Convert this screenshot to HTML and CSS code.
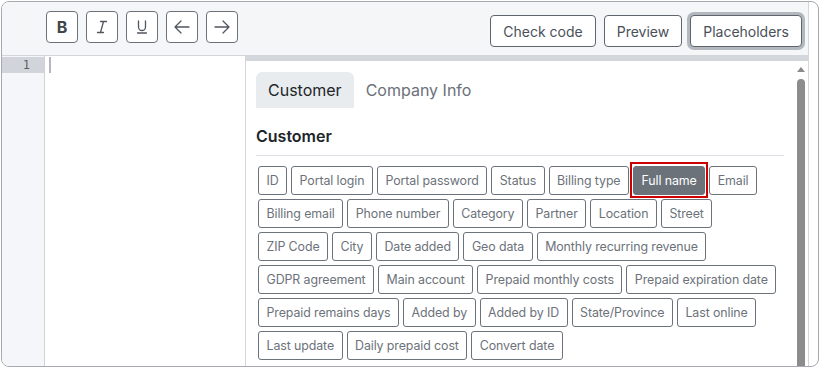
FILE: index.html
```html
<!DOCTYPE html>
<html>
<head>
    <meta charset="utf-8" />
    <title>Template editor</title>
    <link rel="stylesheet" href="styles.css">
</head>
<body>
    <div class="frame">
        <div class="editor">
            <div class="toolbar">
                <div class="group">
                    <button class="tool"><b>B</b></button>
                    <button class="tool">
                        <svg width="16" height="16" viewBox="0 0 16 16"><path d="M6.5 2.5h6M3.5 13.5h6M9.5 2.5l-3 11" /></svg>
                    </button>
                    <button class="tool">
                        <svg width="16" height="16" viewBox="0 0 16 16"><path d="M4.5 2v6a3.5 3.5 0 0 0 7 0V2M3.5 14h9" /></svg>
                    </button>
                    <button class="tool">
                        <svg width="18" height="18" viewBox="0 0 18 18"><path d="M16 9H2M8 3L2 9l6 6" /></svg>
                    </button>
                    <button class="tool">
                        <svg width="18" height="18" viewBox="0 0 18 18"><path d="M2 9h14M10 3l6 6-6 6" /></svg>
                    </button>
                </div>
                <div class="group right">
                    <button class="action">Check code</button>
                    <button class="action">Preview</button>
                    <button class="action focused">Placeholders</button>
                </div>
            </div>

            <div class="code">
                <div class="gutter">
                    <div class="lineno active">1</div>
                </div>
                <div class="lines">
                    <div class="line"><span class="cursor"></span></div>
                </div>

                <!-- placeholders popup over the code area -->
                <div class="panel">
                    <div class="panel-body">
                        <div class="tabs">
                            <div class="tab active">Customer</div>
                            <div class="tab">Company Info</div>
                        </div>
                        <h3>Customer</h3>
                        <div class="tags">
                            <div class="tag-row">
                                <span class="tag">ID</span>
                                <span class="tag">Portal login</span>
                                <span class="tag">Portal password</span>
                                <span class="tag">Status</span>
                                <span class="tag">Billing type</span>
                                <span class="tag selected">Full name</span>
                                <span class="tag">Email</span>
                            </div>
                            <div class="tag-row">
                                <span class="tag">Billing email</span>
                                <span class="tag">Phone number</span>
                                <span class="tag">Category</span>
                                <span class="tag">Partner</span>
                                <span class="tag">Location</span>
                                <span class="tag">Street</span>
                            </div>
                            <div class="tag-row">
                                <span class="tag">ZIP Code</span>
                                <span class="tag">City</span>
                                <span class="tag">Date added</span>
                                <span class="tag">Geo data</span>
                                <span class="tag">Monthly recurring revenue</span>
                            </div>
                            <div class="tag-row">
                                <span class="tag">GDPR agreement</span>
                                <span class="tag">Main account</span>
                                <span class="tag">Prepaid monthly costs</span>
                                <span class="tag">Prepaid expiration date</span>
                            </div>
                            <div class="tag-row">
                                <span class="tag">Prepaid remains days</span>
                                <span class="tag">Added by</span>
                                <span class="tag">Added by ID</span>
                                <span class="tag">State/Province</span>
                                <span class="tag">Last online</span>
                            </div>
                            <div class="tag-row">
                                <span class="tag">Last update</span>
                                <span class="tag">Daily prepaid cost</span>
                                <span class="tag">Convert date</span>
                            </div>
                        </div>
                    </div>
                    <div class="scrollbar">
                        <div class="arrow"></div>
                        <div class="thumb"></div>
                    </div>
                </div>
            </div>
        </div>
    </div>
</body>
</html>
```

FILE: styles.css
```css
html, body {
    margin: 0;
    background: #ffffff;
}

body {
    padding: 1px;
    font-family: Inter, "Noto Sans", sans-serif;
}

.frame {
    width: 818px;
    height: 366px;
    box-sizing: border-box;
    border: 1px solid #a6aab0;
    border-radius: 8px;
    padding-right: 9px;
    overflow: hidden;
    background: #ffffff;
}

.editor {
    height: 100%;
    border-right: 1px solid #d3d7dc;
    display: flex;
    flex-direction: column;
}

/* toolbar */
.toolbar {
    height: 54px;
    box-sizing: border-box;
    flex-shrink: 0;
    background: #f5f6f8;
    border-bottom: 1px solid #d3d7dc;
    display: flex;
    justify-content: space-between;
    align-items: flex-start;
    padding: 9px 6px 0 44px;
}

.toolbar .group {
    display: flex;
    gap: 8px;
}

.toolbar .group.right {
    margin-top: 4px;
}

.tool {
    width: 32px;
    height: 32px;
    padding: 0;
    background: #ffffff;
    border: 1px solid #6c727a;
    border-radius: 4px;
    display: flex;
    align-items: center;
    justify-content: center;
    color: #41464d;
    font-family: Inter, sans-serif;
    font-size: 16px;
}

.tool b {
    font-weight: 700;
}

.tool svg {
    fill: none;
    stroke: #50565e;
    stroke-width: 1.3;
    stroke-linecap: round;
    stroke-linejoin: round;
}

.action {
    height: 32px;
    padding: 0 12px;
    background: #ffffff;
    border: 1px solid #5f656d;
    border-radius: 4px;
    color: #4a5058;
    font-family: Inter, sans-serif;
    font-size: 14px;
}

.action.focused {
    box-shadow: 0 0 0 3px #b3b8be;
}

/* code area */
.code {
    flex: 1;
    display: flex;
    position: relative;
    overflow: hidden;
}

.gutter {
    width: 42px;
    background: #f5f6fa;
    border-right: 1px solid #cfd3d8;
    padding-top: 1px;
}

.lineno {
    height: 16px;
    line-height: 16px;
    text-align: right;
    padding-right: 14px;
    font-family: "DejaVu Sans Mono", monospace;
    font-size: 12px;
    color: #5c6168;
}

.lineno.active {
    background: #d1d5db;
}

.lines {
    flex: 1;
    padding: 1px 0 0 4px;
}

.line {
    height: 16px;
}

.cursor {
    display: block;
    width: 2px;
    height: 16px;
    background: #b5b9bf;
}

/* placeholders popup */
.panel {
    position: absolute;
    left: 243px;
    top: 0;
    right: 0;
    bottom: 0;
    border-top: 5px solid #d3d7dc;
    border-left: 1px solid #d3d7dc;
    background: #ffffff;
    display: flex;
}

.panel-body {
    flex: 1;
    padding: 11px 9px 0 10px;
}

.tabs {
    display: flex;
}

.tab {
    height: 36px;
    line-height: 36px;
    padding: 0 12px;
    font-size: 16px;
    color: #6b7079;
    border-radius: 6px 6px 0 0;
}

.tab.active {
    background: #e9ecef;
    color: #212529;
}

.panel h3 {
    margin: 18px 0 0;
    font-size: 16px;
    font-weight: 600;
    line-height: 20px;
    color: #212529;
    padding-bottom: 9px;
    border-bottom: 1px solid #dee2e6;
}

.tags {
    display: flex;
    flex-direction: column;
    gap: 4px;
    padding: 10px 0 0 2px;
}

.tag-row {
    display: flex;
    gap: 4px;
}

.tag {
    position: relative;
    height: 27px;
    line-height: 27px;
    padding: 0 7.5px;
    border: 1px solid #6c727a;
    border-radius: 3px;
    font-size: 12.4px;
    letter-spacing: -0.1px;
    color: #6c727a;
    background: #ffffff;
    white-space: nowrap;
}

.tag.selected {
    background: #6c727a;
    color: #ffffff;
}

/* red highlight box around the selected placeholder */
.tag.selected::after {
    content: "";
    position: absolute;
    top: -5px;
    bottom: -4px;
    left: -4px;
    right: -4px;
    border: 2px solid #cc0000;
}

.scrollbar {
    width: 15px;
    display: flex;
    flex-direction: column;
    align-items: center;
    padding-top: 6px;
}

.arrow {
    width: 0;
    height: 0;
    border-left: 4px solid transparent;
    border-right: 4px solid transparent;
    border-bottom: 5px solid #8a8a8a;
}

.thumb {
    margin-top: 7px;
    width: 8px;
    flex: 1;
    background: #8c8c8c;
    border-radius: 4px 4px 0 0;
}
```
